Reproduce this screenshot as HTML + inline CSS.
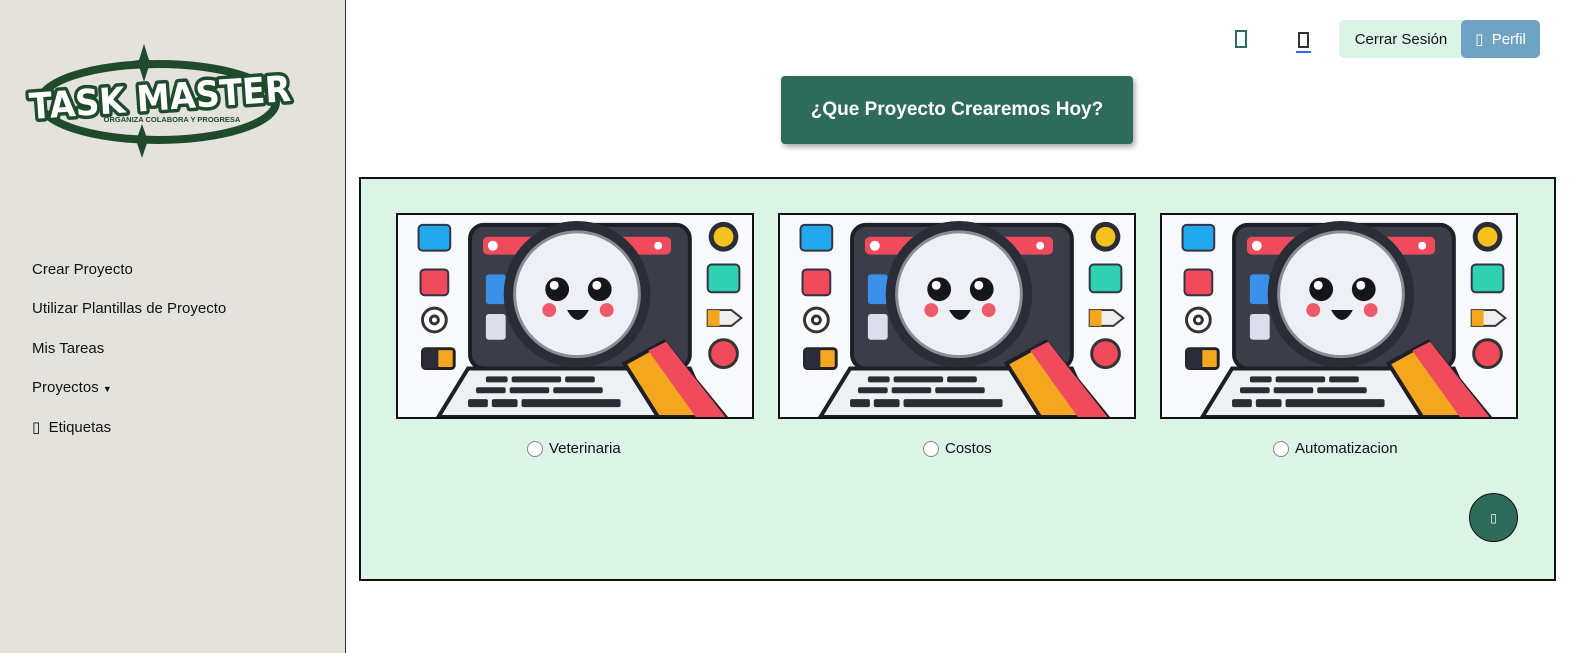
<!DOCTYPE html>
<html><head><meta charset="utf-8"><style>
*{box-sizing:border-box;margin:0;padding:0}
body{width:1584px;height:653px;position:relative;font-family:"Liberation Sans","DejaVu Sans",sans-serif;background:#fff;overflow:hidden}
.side{position:absolute;left:0;top:0;width:346px;height:653px;background:#e3e2dd;border-right:1.5px solid #333}
.nav{position:absolute;left:32px;font-size:15px;color:#111}
.main{position:absolute;left:359px;top:177px;width:1197px;height:404px;background:#dbf4e5;border:2px solid #111}
.card{position:absolute;top:213px;width:358px;height:206px;border:2px solid #111;background:#fafbfd}
.lbl{position:absolute;top:440px;font-size:15px;color:#111;display:flex;align-items:center;gap:6px}
.rad{width:16px;height:16px;border-radius:50%;border:1px solid #888;background:#fff}
.title{position:absolute;left:781px;top:76px;width:352px;height:68px;background:#2e6b5a;border-radius:4px;color:#fff;font-weight:bold;font-size:19px;display:flex;align-items:center;justify-content:center;box-shadow:2px 3px 6px rgba(0,0,0,.35)}
</style></head><body>
<svg width="0" height="0" style="position:absolute"><defs>
<symbol id="ill" viewBox="0 0 356 204">
<rect width="356" height="204" fill="#f8f9fc"/>
<rect x="72" y="10" width="222" height="145" rx="14" fill="#3b3d48" stroke="#1d1e26" stroke-width="4"/>
<rect x="85" y="22" width="190" height="18" rx="5" fill="#ef4b5c"/>
<circle cx="95" cy="31" r="5" fill="#fff"/><circle cx="262" cy="31" r="4" fill="#fff"/>
<rect x="88" y="60" width="20" height="30" rx="3" fill="#3a8fe8"/>
<rect x="88" y="100" width="20" height="26" rx="3" fill="#dde"/>
<path d="M70 155 L40 204 L316 204 L294 155 Z" fill="#eef0f4" stroke="#1d1e26" stroke-width="4"/>
<g fill="#2a2c36"><rect x="88" y="163" width="22" height="6" rx="2"/><rect x="114" y="163" width="50" height="6" rx="2"/><rect x="168" y="163" width="30" height="6" rx="2"/><rect x="78" y="174" width="30" height="6" rx="2"/><rect x="112" y="174" width="40" height="6" rx="2"/><rect x="156" y="174" width="50" height="6" rx="2"/><rect x="70" y="186" width="20" height="8" rx="2"/><rect x="94" y="186" width="26" height="8" rx="2"/><rect x="124" y="186" width="100" height="8" rx="2"/></g>
<path d="M228 150 L268 128 L330 204 L262 204 Z" fill="#f4a71e" stroke="#1d1e26" stroke-width="4"/>
<path d="M252 137 L270 128 L330 204 L300 204 Z" fill="#ef4b5c"/>
<circle cx="180" cy="80" r="74" fill="#2a2c36"/>
<circle cx="180" cy="80" r="63" fill="#eef0f5" stroke="#8a8d98" stroke-width="3"/>
<circle cx="160" cy="75" r="12" fill="#15161c"/><circle cx="203" cy="75" r="12" fill="#15161c"/>
<circle cx="157" cy="71" r="4.5" fill="#fff"/><circle cx="200" cy="71" r="4.5" fill="#fff"/>
<circle cx="152" cy="96" r="7" fill="#ef5a6a"/><circle cx="210" cy="96" r="7" fill="#ef5a6a"/>
<path d="M170 96 Q181 116 192 96 Z" fill="#15161c"/>
<rect x="20" y="10" width="32" height="26" rx="4" fill="#22a8ee" stroke="#334" stroke-width="2"/>
<rect x="22" y="55" width="28" height="26" rx="4" fill="#ef4b5c" stroke="#334" stroke-width="2"/>
<circle cx="36" cy="106" r="12" fill="#fff" stroke="#333" stroke-width="3"/><circle cx="36" cy="106" r="4" fill="none" stroke="#333" stroke-width="3"/>
<rect x="24" y="135" width="32" height="20" rx="3" fill="#f4a71e" stroke="#222" stroke-width="3"/><rect x="24" y="135" width="16" height="20" fill="#2a2c36"/>
<circle cx="328" cy="22" r="15" fill="#2a2c36"/><circle cx="328" cy="22" r="10" fill="#f4c21e"/>
<rect x="312" y="50" width="32" height="28" rx="4" fill="#30d1b1" stroke="#334" stroke-width="2"/>
<path d="M312 96 H336 L346 104 L336 112 H312 Z" fill="#eee" stroke="#333" stroke-width="2"/><rect x="312" y="96" width="12" height="16" fill="#f4a71e"/>
<circle cx="328" cy="140" r="14" fill="#ef4b5c" stroke="#333" stroke-width="3"/>
</symbol></defs></svg>

<div class="side">
<svg style="position:absolute;left:22px;top:42px" width="278" height="118" viewBox="0 0 278 118">
<ellipse cx="136" cy="60" rx="118" ry="38" fill="none" stroke="#1f4a2b" stroke-width="8"/>
<path d="M122 2 L127 18 L140 20 L127 24 L122 40 L117 24 L104 20 L117 18Z" fill="#1f4a2b"/>
<path d="M120 82 L125 96 L138 98 L125 101 L120 116 L115 101 L102 98 L115 96Z" fill="#1f4a2b"/>
<text x="138" y="68" text-anchor="middle" font-family="DejaVu Sans" font-weight="bold" font-size="36" fill="#fff" stroke="#1f4a2b" stroke-width="7" stroke-linejoin="round" paint-order="stroke" transform="rotate(-4 138 55)" textLength="262" lengthAdjust="spacingAndGlyphs">TASK MASTER</text>
<text x="150" y="80" text-anchor="middle" font-family="Liberation Sans" font-weight="bold" font-size="7.5" fill="#1f4a2b">ORGANIZA COLABORA Y PROGRESA</text>
</svg>
<div class="nav" style="top:261px">Crear Proyecto</div>
<div class="nav" style="top:300px">Utilizar Plantillas de Proyecto</div>
<div class="nav" style="top:340px">Mis Tareas</div>
<div class="nav" style="top:379px">Proyectos <span style="font-size:9px">▼</span></div>
<div class="nav" style="top:418px">▯&nbsp; Etiquetas</div>
</div>

<div style="position:absolute;left:1235px;top:30px;width:12px;height:18px;border:2px solid #2e6b5a"></div>
<div style="position:absolute;left:1298px;top:32px;width:11px;height:16px;border:2px solid #333"></div>
<div style="position:absolute;left:1296px;top:51px;width:15px;height:1.5px;background:#36f"></div>
<div style="position:absolute;left:1339px;top:20px;width:124px;height:38px;background:#dbf4e5;border-radius:5px 0 0 5px;font-size:15px;display:flex;align-items:center;justify-content:center;color:#111">Cerrar Sesión</div>
<div style="position:absolute;left:1461px;top:20px;width:79px;height:38px;background:#6fa3c4;border-radius:5px;font-size:15px;display:flex;align-items:center;justify-content:center;color:#fff">▯&nbsp; Perfil</div>

<div class="title">¿Que Proyecto Crearemos Hoy?</div>
<div class="main"></div>
<div class="card" style="left:396px"><svg width="354" height="202"><use href="#ill"/></svg></div>
<div class="card" style="left:778px"><svg width="354" height="202"><use href="#ill"/></svg></div>
<div class="card" style="left:1160px"><svg width="354" height="202"><use href="#ill"/></svg></div>
<div class="lbl" style="left:527px"><div class="rad"></div>Veterinaria</div>
<div class="lbl" style="left:923px"><div class="rad"></div>Costos</div>
<div class="lbl" style="left:1273px"><div class="rad"></div>Automatizacion</div>
<div style="position:absolute;left:1469px;top:493px;width:49px;height:49px;border-radius:50%;background:#2e6b5a;border:1.5px solid #111;color:#fff;font-size:12px;display:flex;align-items:center;justify-content:center">▯</div>
</body></html>
